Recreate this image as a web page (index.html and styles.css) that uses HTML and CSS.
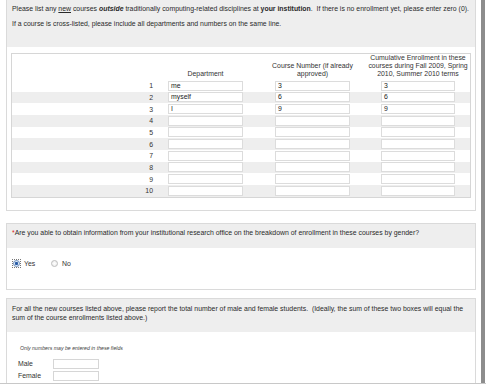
FILE: index.html
```html
<!DOCTYPE html>
<html>
<head>
<meta charset="utf-8">
<link rel="stylesheet" href="styles.css">
</head>
<body>
<div class="frame">
  <div class="page">
    <section class="panel p1">
      <div class="head head1">
        <p>Please list any <u>new</u> courses <b><i>outside</i></b> traditionally computing-related disciplines at <b>your institution</b>.&nbsp; If there is no enrollment yet, please enter zero (0).</p>
        <p>If a course is cross-listed, please include all departments and numbers on the same line.</p>
      </div>
      <div class="body body1">
        <div class="tbl">
          <div class="row hdr">
            <span></span>
            <span class="lbl lbl-dept">Department</span>
            <span></span>
            <span class="lbl lbl-course">Course Number (if already<br>approved)</span>
            <span></span>
            <span class="lbl lbl-enr">Cumulative Enrollment in these<br>courses during Fall 2009, Spring<br>2010, Summer 2010 terms</span>
          </div>
          <div class="row"><span class="num">1</span><span class="inp">me</span><span></span><span class="inp">3</span><span></span><span class="inp">3</span></div>
          <div class="row alt"><span class="num">2</span><span class="inp">myself</span><span></span><span class="inp">6</span><span></span><span class="inp">6</span></div>
          <div class="row"><span class="num">3</span><span class="inp">I</span><span></span><span class="inp">9</span><span></span><span class="inp">9</span></div>
          <div class="row alt"><span class="num">4</span><span class="inp"></span><span></span><span class="inp"></span><span></span><span class="inp"></span></div>
          <div class="row"><span class="num">5</span><span class="inp"></span><span></span><span class="inp"></span><span></span><span class="inp"></span></div>
          <div class="row alt"><span class="num">6</span><span class="inp"></span><span></span><span class="inp"></span><span></span><span class="inp"></span></div>
          <div class="row"><span class="num">7</span><span class="inp"></span><span></span><span class="inp"></span><span></span><span class="inp"></span></div>
          <div class="row alt"><span class="num">8</span><span class="inp"></span><span></span><span class="inp"></span><span></span><span class="inp"></span></div>
          <div class="row"><span class="num">9</span><span class="inp"></span><span></span><span class="inp"></span><span></span><span class="inp"></span></div>
          <div class="row alt"><span class="num">10</span><span class="inp"></span><span></span><span class="inp"></span><span></span><span class="inp"></span></div>
        </div>
      </div>
    </section>

    <section class="panel p2">
      <div class="head head2">
        <p><span class="req">*</span>Are you able to obtain information from your institutional research office on the breakdown of enrollment in these courses by gender?</p>
      </div>
      <div class="body body2">
        <label class="opt opt-yes"><span class="focus"><span class="radio checked"></span></span><span class="opt-text">Yes</span></label>
        <label class="opt opt-no"><span class="radio"></span><span class="opt-text">No</span></label>
      </div>
    </section>

    <section class="panel p3">
      <div class="head head3">
        <p>For all the new courses listed above, please report the total number of male and female students.&nbsp; (Ideally, the sum of these two boxes will equal the sum of the course enrollments listed above.)</p>
      </div>
      <div class="body body3">
        <p class="note">Only numbers may be entered in these fields</p>
        <div class="field"><span class="flabel">Male</span><span class="finp"></span></div>
        <div class="field"><span class="flabel">Female</span><span class="finp"></span></div>
      </div>
    </section>
  </div>
</div>
<div class="bottom"></div>
</body>
</html>
```

FILE: styles.css
```css
html, body {
  margin: 0;
  padding: 0;
  background: #ffffff;
}
body {
  font-family: "Liberation Sans", Arial, sans-serif;
  font-size: 6.9px;
  color: #2a2a2a;
  width: 486px;
  height: 387px;
  overflow: hidden;
}
p { margin: 0; }

.frame {
  height: 383px;
  display: flex;
}
.page {
  width: 475px;
  margin-left: 6px;
  border-right: 4px solid #8d8d8d;
  height: 383px;
  overflow: hidden;
}
.panel {
  width: 468px;
  border: 1px solid #dadada;
  background: #fff;
}
.p1 { border-top: none; }
.p2 { margin-top: 12px; }
.p3 { margin-top: 8px; }

.head {
  background: #eeeeee;
  padding: 0 5px;
  line-height: 9px;
  box-sizing: border-box;
}
.head1 {
  height: 47px;
  padding-top: 4px;
}
.head1 p + p { margin-top: 6px; }
.head2 {
  height: 24px;
  padding-top: 4px;
}
.head3 {
  height: 33px;
  padding-top: 5px;
}
.req { color: #d22; }

.body1 {
  padding: 6px 4px 12px 4px;
}
.tbl {
  border: 1px solid #d6d6d6;
}
.row {
  display: grid;
  grid-template-columns: 156px 75px 32px 75px 31px 74px 1fr;
  height: 11.67px;
  align-items: center;
}
.row.alt { background: #eeeeee; }
.row.hdr {
  height: 26px;
  align-items: end;
}
.lbl {
  text-align: center;
  line-height: 8px;
  padding-bottom: 2px;
  color: #333;
}
.lbl-course {
  width: 95px;
  margin-left: -10px;
}
.lbl-enr {
  width: 104px;
  margin-left: -15px;
}
.num {
  text-align: right;
  padding-right: 15px;
  color: #333;
}
.inp {
  display: block;
  box-sizing: border-box;
  height: 10px;
  border: 1px solid #dcdcdc;
  background: #fff;
  line-height: 8px;
  padding-left: 2px;
  color: #222;
}

.body2 {
  height: 41px;
  display: flex;
  align-items: flex-start;
  padding-left: 6px;
  padding-top: 12px;
  box-sizing: border-box;
}
.opt {
  display: flex;
  align-items: center;
  height: 8px;
}
.opt-yes { width: 38px; }
.focus {
  display: inline-flex;
  outline: 1px dotted #777;
  outline-offset: 0;
}
.radio {
  display: inline-block;
  width: 5px;
  height: 5px;
  border-radius: 50%;
  border: 1px solid #bdbdbd;
  background: radial-gradient(circle, #ffffff 0%, #e8e8e8 100%);
}
.radio.checked {
  border-color: #6a8dbb;
  background: radial-gradient(circle, #2a5ca6 0 1.3px, #d9e7f7 1.9px, #f0f6fc 100%);
}
.opt-text {
  margin-left: 4px;
  color: #333;
}

.body3 {
  padding: 13px 0 0 11px;
  height: 60px;
}
.note {
  font-style: italic;
  font-size: 5.2px;
  color: #444;
  line-height: 6px;
  margin-left: 2px;
  margin-bottom: 7px;
}
.field {
  display: flex;
  align-items: center;
  height: 12px;
}
.flabel {
  width: 35px;
  color: #333;
}
.finp {
  display: block;
  width: 46px;
  height: 10px;
  box-sizing: border-box;
  border: 1px solid #d6d6d6;
}

.bottom {
  height: 1px;
  background: #c8c8c8;
  width: 486px;
}
```
